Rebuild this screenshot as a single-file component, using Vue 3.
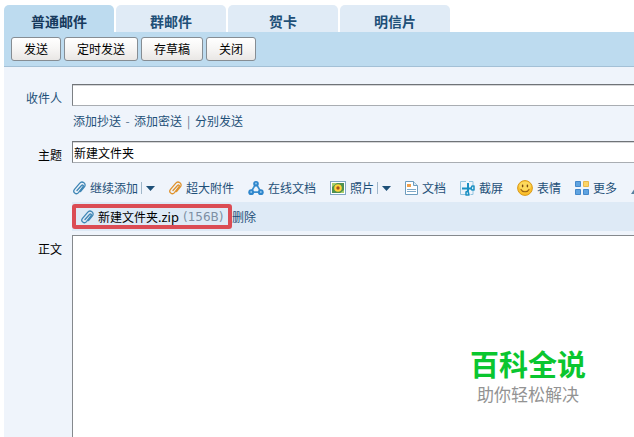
<template>
  <main class="compose">
    <nav class="tabs">
      <button
        v-for="tab in tabs"
        :key="tab"
        type="button"
        class="tab"
        :class="{ active: tab === current }"
        @click="current = tab"
      >{{ tab }}</button>
    </nav>

    <div class="actions">
      <button v-for="a in actions" :key="a" type="button" class="btn">{{ a }}</button>
    </div>

    <form class="form" @submit.prevent>
      <div class="row">
        <label class="label link" for="to">收件人</label>
        <input id="to" v-model="to" class="field" type="text">
      </div>

      <div class="row cc">
        <a href="#">添加抄送</a><span class="dash">-</span><a href="#">添加密送</a><span class="dash">|</span><a href="#">分别发送</a>
      </div>

      <div class="row">
        <label class="label" for="subject">主题</label>
        <input id="subject" v-model="subject" class="field" type="text">
      </div>

      <div class="row tools">
        <span v-for="t in tools" :key="t.name" class="tool">
          <a href="#" class="tool-link" :aria-label="t.name">
            <svg v-if="t.icon === 'clip' || t.icon === 'bigclip'" class="i13" :class="t.icon" viewBox="0 0 13 14">
              <path :d="clipPath" stroke-width="1.3" />
            </svg>
            <svg v-else-if="t.icon === 'online'" class="i16" viewBox="0 0 16 16">
              <path d="M8 3.5 3 12.2h10z" fill="none" stroke="#3c8fcf" stroke-width="1.7" stroke-linejoin="round" />
              <circle cx="8" cy="3.7" r="2.8" fill="#2f86cc" />
              <circle cx="3.2" cy="12.2" r="2.9" fill="#2f86cc" />
              <circle cx="12.8" cy="12.2" r="2.9" fill="#2f86cc" />
              <circle cx="8" cy="3.5" r="1" fill="#8fc6ee" />
              <circle cx="3.2" cy="12" r="1" fill="#8fc6ee" />
              <circle cx="12.8" cy="12" r="1" fill="#8fc6ee" />
            </svg>
            <svg v-else-if="t.icon === 'photo'" class="i16" viewBox="0 0 16 16">
              <rect x=".5" y="1.5" width="15" height="13" fill="#fff" stroke="#7fa6c4" />
              <rect x="2" y="3" width="12" height="10" fill="#4f9150" />
              <path d="M2 3h5L2 7zM14 13h-4l4-3z" fill="#a9cf6b" />
              <circle cx="8" cy="8" r="3.8" fill="#ffd43a" />
              <circle cx="8" cy="8" r="1.7" fill="#a8501e" />
            </svg>
            <svg v-else-if="t.icon === 'doc'" class="i13" viewBox="0 0 13 14">
              <path d="M.5.5h8l4 4v9H.5z" fill="#fff" stroke="#6d9cbe" />
              <path d="M8.5.5v4h4" fill="#d9e9f5" stroke="#6d9cbe" />
              <rect x="2" y="3" width="4" height="3" fill="#f0a04b" />
              <path d="M2 8.5h9M2 10.5h9" stroke="#7fa9c8" />
            </svg>
            <svg v-else-if="t.icon === 'cut'" class="i15" viewBox="0 0 15 15">
              <path d="M6 .5H.5v13H6M9 .5h4V4M10.500 13.500H13V10" fill="none" stroke="#93c4e0" />
              <path d="M8 2v8M2 7.500h9" fill="none" stroke="#1b8fc2" stroke-width="2" />
              <path d="M11 7.500 12 5h2v4h-2zM8 10l-2 1v3h3z" fill="#dff3fb" stroke="#1b8fc2" stroke-width="1.500" stroke-linejoin="round" />
            </svg>
            <svg v-else-if="t.icon === 'smile'" class="i16" viewBox="0 0 16 16">
              <circle cx="8" cy="8" r="7.4" fill="#fbc02d" stroke="#d99a1c" />
              <ellipse cx="8" cy="6" rx="5.8" ry="4.6" fill="#fdd95c" />
              <ellipse cx="5.6" cy="6" rx=".8" ry="1.4" fill="#7a4a10" />
              <ellipse cx="10.4" cy="6" rx=".8" ry="1.4" fill="#7a4a10" />
              <path d="M4 9.400c1.500 3.200 6.500 3.200 8 0" fill="none" stroke="#9a6416" stroke-width="1.1" stroke-linecap="round" />
            </svg>
            <svg v-else-if="t.icon === 'more'" class="i14" viewBox="0 0 14 14">
              <path d="M.5.5h5v5h-5zM.5 8.500h5v5h-5zM8.500 8.500h5v5h-5z" fill="#5fa3e0" stroke="#4388cb" />
              <path d="M8.500.5h5v5h-5z" fill="#fbd467" stroke="#e9b84a" />
            </svg>
            <svg v-else class="i14" viewBox="0 0 14 14">
              <path d="M0 13 8 1l3 12z" fill="#56819f" />
            </svg>
            <span v-if="t.icon !== 'format'">{{ t.name }}</span>
          </a>
          <button v-if="t.menu" type="button" class="drop" :aria-label="t.name">
            <svg viewBox="0 0 9 5"><path d="M0 0h9L4.500 5z" fill="#1e5078" /></svg>
          </button>
        </span>
      </div>

      <div class="row attach">
        <div class="attach-bar">
          <span class="file">
            <svg class="i13 clip" viewBox="0 0 13 14">
              <path :d="clipPath" stroke-width="1.3" />
            </svg>
            <span class="file-name">新建文件夹<span class="ext">.zip</span></span>
            <span class="size">(156B)</span>
          </span>
          <a href="#">删除</a>
        </div>
      </div>

      <div class="row body-row">
        <label class="label" for="content">正文</label>
        <div class="editor">
          <textarea id="content" v-model="content"></textarea>
          <div class="mark">
            <strong>百科全说</strong>
            <span>助你轻松解决</span>
          </div>
        </div>
      </div>
    </form>
  </main>
</template>

<script setup>
import { ref } from 'vue'

const tabs = ['普通邮件', '群邮件', '贺卡', '明信片']
const current = ref('普通邮件')
const actions = ['发送', '定时发送', '存草稿', '关闭']

const tools = [
  { name: '继续添加', icon: 'clip', menu: true },
  { name: '超大附件', icon: 'bigclip' },
  { name: '在线文档', icon: 'online' },
  { name: '照片', icon: 'photo', menu: true },
  { name: '文档', icon: 'doc' },
  { name: '截屏', icon: 'cut' },
  { name: '表情', icon: 'smile' },
  { name: '更多', icon: 'more' },
  { name: '格式', icon: 'format' },
]

// paperclip, used in the toolbar and in the attachment row
const clipPath = 'M4 9.5 8.5 4.5c1.2-1.2 2.5 0 1.4 1.3L5.500 11.600c-2.400 2.800-6.300-.4-4-3.300L6.600 2.300c2.600-3 7.300.4 4.800 3.600L7.500 10.600'

const to = ref('')
const subject = ref('新建文件夹')
const content = ref('')
</script>

<style>
body { margin: 0; background: #fff; }
</style>

<style scoped>
.compose {
  box-sizing: border-box;
  min-height: 100vh;
  padding: 5px 0 0 4px;
  display: flex;
  flex-direction: column;
  overflow: hidden;
  font: 12px/16px "Noto Sans CJK SC", sans-serif;
  color: #000;
}
.compose * { box-sizing: border-box; }
button, input, textarea { font: inherit; color: inherit; margin: 0; }
a { color: #1e5078; text-decoration: none; }
svg { display: block; flex: none; }

.tabs { display: flex; gap: 2px; }
.tab {
  width: 110px; height: 27px; padding: 5px 0 0; border: 0;
  border-radius: 5px 5px 0 0;
  background: #e0ebf6; color: #1e5078;
  font-size: 14px; font-weight: bold; line-height: 20px;
}
.tab.active { background: #bddbef; color: #16395c; }

.actions {
  display: flex; gap: 3px;
  height: 35px; padding: 5px 7px 0;
  background: #bddbef; border-bottom: 1px solid #a3c0d6;
}
.btn {
  height: 24px; padding: 0 12px;
  border: 1px solid #868d93; border-radius: 3px;
  background: linear-gradient(#fff, #f6f5f4 50%, #e9e7e5);
  line-height: 22px;
}

.form {
  flex: 1; display: flex; flex-direction: column;
  padding-top: 17px; background: #eff4fb;
}
.row { display: flex; padding-left: 68px; }
.label { width: 58px; margin: 6px 10px 0 -68px; flex: none; text-align: right; }
.label.link { color: #1e5078; }
.field {
  flex: 1; min-width: 0; height: 22px; padding: 0 1px;
  border: 1px solid #a9adb2; border-top-color: #6f7377; border-left-color: #7c8084; border-right: 0;
  box-shadow: inset 0 1px #d5d6d8;
  background: #fff; border-radius: 0; outline: 0;
}
.cc { height: 35px; padding-top: 7px; padding-left: 69px; }
.dash { width: 13px; text-align: center; color: #5d7790; }

.tools { height: 39px; padding-top: 17px; padding-left: 69px; gap: 14px; }
.tool, .tool-link { display: flex; align-items: center; height: 16px; flex: none; white-space: nowrap; }
.tool-link { gap: 4px; }
.i13 { width: 13px; height: 14px; }
.i14 { width: 14px; height: 14px; }
.i15 { width: 15px; height: 15px; }
.i16 { width: 16px; height: 16px; }
.clip, .bigclip { fill: none; stroke: #3f86b5; stroke-linecap: round; }
.bigclip { stroke: #df922c; }
.drop {
  width: 14px; height: 12px; margin-left: 3px; padding: 0 0 0 4px;
  border: 0; border-left: 1px solid #9fb6c9; background: none;
}
.drop svg { width: 9px; height: 5px; }

.attach-bar {
  flex: 1; display: flex; align-items: center;
  height: 29px; margin-bottom: 4px; background: #deeaf6;
}
.file {
  display: flex; align-items: center; gap: 4px;
  width: 160px; height: 25px; padding-left: 5px;
  border: 4px solid #db4c54; border-radius: 3px;
  white-space: nowrap;
}
.ext { font-family: "Noto Sans", sans-serif; font-size: 13px; }
.size { color: #7d8fa3; font-family: "DejaVu Sans", sans-serif; }

.body-row { flex: 1; }
.editor { position: relative; flex: 1; display: flex; min-height: 202px; background: #fff; }
textarea {
  flex: 1; min-width: 0; padding: 4px; resize: none; outline: 0; border-radius: 0;
  border: 1px solid #85898d; border-width: 1px 0 0 1px; background: #fff;
}
.mark {
  position: absolute; right: 48px; bottom: 31px;
  display: flex; flex-direction: column; align-items: center;
  font-family: "Liberation Sans", "Noto Sans CJK SC", sans-serif;
  pointer-events: none;
}
.mark strong { font-size: 29px; line-height: 40px; color: #0ac62f; }
.mark span { font-size: 17px; line-height: 20px; color: #939393; }
</style>
